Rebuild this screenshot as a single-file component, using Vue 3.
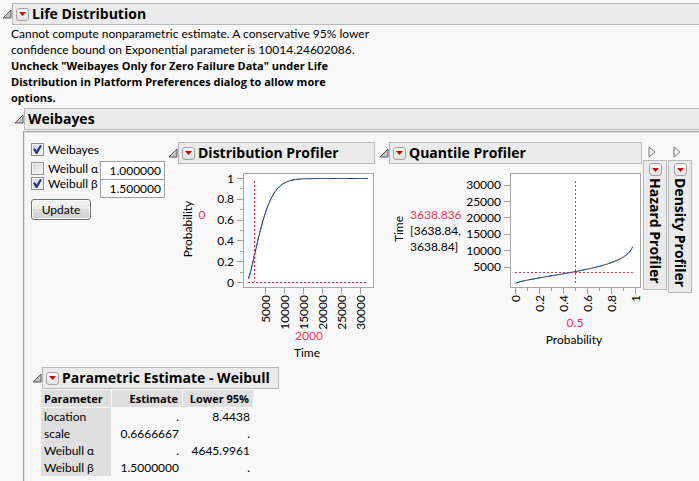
<script setup>
import { ref } from 'vue'

const useWeibayes = ref(true)
const fixAlpha = ref(false)
const fixBeta = ref(true)
const alpha = ref('1.000000')
const beta = ref('1.500000')

const scale = 4645.9961
const shape = 1.5

// Distribution profiler scales
const timeX = (t) => 246.5 + (t * 19) / 5000
const probY = (p) => 282.5 - p * 104
// Quantile profiler scales
const probX = (p) => 515.5 + p * 120
const timeY = (t) => 283.5 - (t * 82) / 25000

const toPath = (points) =>
  'M' + points.map(([x, y]) => `${x.toFixed(2)} ${y.toFixed(2)}`).join('L')

const cdfPoints = []
for (let t = 500; t <= 32000; t += 250) {
  cdfPoints.push([timeX(t), probY(1 - Math.exp(-Math.pow(t / scale, shape)))])
}
const cdfPath = toPath(cdfPoints)

const quantilePoints = []
for (let p = 0.001; p <= 0.976; p += 0.0075) {
  quantilePoints.push([probX(p), timeY(scale * Math.pow(-Math.log(1 - p), 1 / shape))])
}
const quantilePath = toPath(quantilePoints)

const snap = (v) => Math.floor(v) + 0.5
const probTicks = [0, 0.2, 0.4, 0.6, 0.8, 1]
const probMinor = [0.1, 0.3, 0.5, 0.7, 0.9]
const timeTicks = [5000, 10000, 15000, 20000, 25000, 30000]

const estimates = [
  { name: 'location', estimate: '.', lower: '8.4438' },
  { name: 'scale', estimate: '0.6666667', lower: '.' },
  { name: 'Weibull α', estimate: '.', lower: '4645.9961' },
  { name: 'Weibull β', estimate: '1.5000000', lower: '.' }
]
</script>

<template>
  <main class="report">
    <header class="outline">
      <button class="disclose" aria-label="Collapse Life Distribution">
        <svg viewBox="0 0 10 10"><path d="M9 1V9H1Z" /></svg>
      </button>
      <div class="bar grow">
        <button class="menu" aria-label="Life Distribution options">
          <svg viewBox="0 0 9 5"><path d="M0 0H9L4.5 5Z" /></svg>
        </button>
        <h1>Life Distribution</h1>
      </div>
    </header>

    <p class="message">
      Cannot compute nonparametric estimate. A conservative 95% lower<br />
      confidence bound on Exponential parameter is 10014.24602086.<br />
      <strong>
        Uncheck "Weibayes Only for Zero Failure Data" under Life<br />
        Distribution in Platform Preferences dialog to allow more<br />
        options.
      </strong>
    </p>

    <section class="weibayes">
      <div class="outline">
        <button class="disclose" aria-label="Collapse Weibayes">
          <svg viewBox="0 0 10 10"><path d="M9 1V9H1Z" /></svg>
        </button>
        <div class="bar grow"><h2>Weibayes</h2></div>
      </div>

      <div class="panel">
        <div class="row">
          <form class="controls" @submit.prevent>
            <label class="check"><input v-model="useWeibayes" type="checkbox" />Weibayes</label>
            <div class="params">
              <div class="checks">
                <label class="check"><input v-model="fixAlpha" type="checkbox" />Weibull α</label>
                <label class="check"><input v-model="fixBeta" type="checkbox" />Weibull β</label>
              </div>
              <div class="fields">
                <input v-model="alpha" type="text" aria-label="Weibull α value" />
                <input v-model="beta" type="text" aria-label="Weibull β value" />
              </div>
            </div>
            <button class="update" type="submit">Update</button>
          </form>

          <section class="profiler dist">
            <div class="outline">
              <button class="disclose" aria-label="Collapse Distribution Profiler">
                <svg viewBox="0 0 10 10"><path d="M9 1V9H1Z" /></svg>
              </button>
              <div class="bar grow">
                <button class="menu" aria-label="Distribution Profiler options">
                  <svg viewBox="0 0 9 5"><path d="M0 0H9L4.5 5Z" /></svg>
                </button>
                <h3>Distribution Profiler</h3>
              </div>
            </div>
            <svg class="plot" viewBox="178 164 197 196" width="197" height="196">
              <rect class="frame" x="243.5" y="173.5" width="130" height="114" />
              <g v-for="p in probTicks" :key="p">
                <path class="tick" :d="`M237 ${snap(probY(p))}H243`" />
                <text class="end" x="234" :y="probY(p) + 4">{{ p }}</text>
              </g>
              <path v-for="p in probMinor" :key="p" class="tick" :d="`M240 ${snap(probY(p))}H243`" />
              <g v-for="t in timeTicks" :key="t">
                <path class="tick" :d="`M${snap(timeX(t))} 288V294`" />
                <text class="end" :transform="`translate(${snap(timeX(t)) + 4} 295) rotate(-90)`">{{ t }}</text>
              </g>
              <path class="curve" :d="cdfPath" />
              <path class="curve overlay" :d="cdfPath" />
              <path class="cross" d="M254.5 181V282M248 282.5H367" />
              <text class="mid" transform="translate(192 229) rotate(-90)">Probability</text>
              <text class="red mid" x="202" y="219">0</text>
              <text class="red mid" x="309" y="340">2000</text>
              <text class="mid" x="307" y="357">Time</text>
            </svg>
          </section>

          <section class="profiler quant">
            <div class="outline">
              <button class="disclose" aria-label="Collapse Quantile Profiler">
                <svg viewBox="0 0 10 10"><path d="M9 1V9H1Z" /></svg>
              </button>
              <div class="bar grow">
                <button class="menu" aria-label="Quantile Profiler options">
                  <svg viewBox="0 0 9 5"><path d="M0 0H9L4.5 5Z" /></svg>
                </button>
                <h3>Quantile Profiler</h3>
              </div>
            </div>
            <svg class="plot" viewBox="389 164 253 196" width="253" height="196">
              <rect class="frame" x="510.5" y="173.5" width="130" height="114" />
              <g v-for="t in timeTicks" :key="t">
                <path class="tick" :d="`M504 ${snap(timeY(t))}H510`" />
                <text class="end" x="501" :y="timeY(t) + 4">{{ t }}</text>
              </g>
              <g v-for="p in probTicks" :key="p">
                <path class="tick" :d="`M${probX(p)} 288V294`" />
                <text class="end" :transform="`translate(${probX(p) + 4} 295) rotate(-90)`">{{ p }}</text>
              </g>
              <path v-for="p in probMinor" :key="p" class="tick" :d="`M${probX(p)} 288V291`" />
              <path class="curve" :d="quantilePath" />
              <path class="curve overlay" :d="quantilePath" />
              <path class="cross" d="M575.5 181V284M515 272.5H633" />
              <text class="mid" transform="translate(403 229) rotate(-90)">Time</text>
              <text class="red" x="410" y="219">3638.836</text>
              <text x="410" y="235">[3638.84,</text>
              <text x="410" y="251">3638.84]</text>
              <text class="red mid" x="575" y="327">0.5</text>
              <text class="mid" x="574" y="344">Probability</text>
            </svg>
          </section>

          <section v-for="name in ['Hazard', 'Density']" :key="name" class="closed">
            <button class="disclose" :aria-label="`Expand ${name} Profiler`">
              <svg class="open" viewBox="0 0 8 12"><path d="M1 1L7 6L1 11Z" /></svg>
            </button>
            <div class="bar vertical">
              <button class="menu" :aria-label="`${name} Profiler options`">
                <svg viewBox="0 0 9 5"><path d="M0 0H9L4.5 5Z" /></svg>
              </button>
              <h3>{{ name }} Profiler</h3>
            </div>
          </section>
        </div>

        <section class="estimates">
          <div class="outline">
            <button class="disclose" aria-label="Collapse Parametric Estimate">
              <svg viewBox="0 0 10 10"><path d="M9 1V9H1Z" /></svg>
            </button>
            <div class="bar wide">
              <button class="menu" aria-label="Parametric Estimate options">
                <svg viewBox="0 0 9 5"><path d="M0 0H9L4.5 5Z" /></svg>
              </button>
              <h3>Parametric Estimate - Weibull</h3>
            </div>
          </div>
          <table>
            <thead>
              <tr><th>Parameter</th><th>Estimate</th><th>Lower 95%</th></tr>
            </thead>
            <tbody>
              <tr v-for="row in estimates" :key="row.name">
                <th scope="row">{{ row.name }}</th>
                <td>{{ row.estimate }}</td>
                <td>{{ row.lower }}</td>
              </tr>
            </tbody>
          </table>
        </section>
      </div>
    </section>
  </main>
</template>

<style>
body {
  background: #f8f8f8;
}
</style>

<style scoped>
.report {
  box-sizing: border-box;
  min-height: 100vh;
  display: flex;
  flex-direction: column;
  padding: 3px 0 0 2px;
  overflow: hidden;
  color: #000;
  font: 12px/16px Lato, 'Open Sans', sans-serif;
}
button,
input {
  box-sizing: border-box;
  margin: 0;
  padding: 0;
  font: inherit;
  color: inherit;
}
.outline {
  display: flex;
  align-items: center;
}
.disclose {
  flex: none;
  width: 10px;
  height: 10px;
  border: 0;
  background: none;
  display: flex;
}
.disclose svg {
  width: 10px;
  height: 10px;
  fill: #c4c4c4;
  stroke: #555;
}
.disclose svg.open {
  width: 8px;
  height: 12px;
  fill: #fdfdfd;
  stroke: #777;
}
.bar {
  box-sizing: border-box;
  height: 22px;
  display: flex;
  align-items: center;
  gap: 3px;
  padding: 0 3px;
  background: #ebebeb;
  border: 1px solid #b8b8b8;
}
.grow {
  flex: 1;
}
.report > .outline > .bar,
.weibayes > .outline > .bar {
  border-right: 0;
}
h1,
h2,
h3 {
  margin: 0;
  font: 700 14px/20px 'Open Sans', 'Noto Sans', sans-serif;
  white-space: nowrap;
}
.menu {
  flex: none;
  width: 13px;
  height: 13px;
  display: flex;
  align-items: center;
  justify-content: center;
  border: 1px solid #a3a3a3;
  border-radius: 3px;
  background: linear-gradient(#fafafa, #e2e2e2);
}
.menu svg {
  width: 7px;
  height: 4px;
  fill: #d00000;
}
.message {
  margin: 1px 0 2px 9px;
  white-space: nowrap;
}
.message strong,
thead th {
  font-family: 'Open Sans', 'Noto Sans', sans-serif;
  font-size: 11px;
  font-weight: 700;
}
.weibayes {
  flex: 1;
  display: flex;
  flex-direction: column;
  padding-left: 12px;
}
.panel {
  flex: 1;
  margin: 1px 0 0 9px;
  border-left: 1px solid #a0a0a0;
  border-top: 1px solid #a0a0a0;
  box-shadow: inset 1px 1px #e2e2e2;
  padding: 10px 0 5px 7px;
}
.row {
  display: flex;
  align-items: flex-start;
}
.controls {
  flex: none;
  width: 134px;
  display: flex;
  flex-direction: column;
  align-items: flex-start;
}
.check {
  display: flex;
  align-items: center;
  gap: 4px;
  height: 15px;
  white-space: nowrap;
}
.check input {
  appearance: none;
  width: 13px;
  height: 13px;
  border: 1px solid #8e8f8f;
  background: linear-gradient(135deg, #cfd3d8, #f8f8f8);
  box-shadow: inset 0 0 0 1px #f4f4f4;
}
.check input:checked::before {
  content: '';
  display: block;
  width: 9px;
  height: 9px;
  margin: 1px;
  background: #2b3580;
  clip-path: polygon(0 45%, 20% 35%, 40% 62%, 78% 0, 100% 8%, 48% 100%, 32% 100%);
}
.controls > .check {
  margin: 0 0 4px;
}
.params {
  display: flex;
  align-items: flex-start;
  width: 100%;
}
.checks {
  width: 69px;
}
.fields {
  flex: 1;
  min-width: 0;
  display: flex;
  flex-direction: column;
}
.fields input {
  width: 100%;
  height: 19px;
  padding-right: 3px;
  border: 1px solid #a0a0a0;
  background: #fff;
  text-align: right;
}
.fields input + input {
  margin-top: -1px;
}
.update {
  margin-top: 1px;
  width: 60px;
  height: 21px;
  border: 1px solid #707070;
  border-radius: 3px;
  background: linear-gradient(#f3f3f3, #ebebeb 50%, #dddddd 50%, #cfcfcf);
  box-shadow: inset 0 0 0 1px #fafafa;
  line-height: 18px;
}
.profiler {
  flex: none;
}
.dist {
  margin-left: 3px;
}
.quant {
  margin-left: 4px;
}
.plot {
  display: block;
  margin-left: 10px;
}
.plot text {
  font-size: 12px;
}
.plot .end {
  text-anchor: end;
}
.plot .mid {
  text-anchor: middle;
}
.plot .red {
  fill: #f03358;
}
.frame {
  fill: #fff;
  stroke: #a6a6a6;
}
.tick {
  stroke: #a0a0a0;
}
.curve {
  fill: none;
  stroke: #222;
}
.overlay {
  stroke: #2f62e0;
  stroke-dasharray: 9 7;
}
.cross {
  fill: none;
  stroke: #e0304c;
  stroke-dasharray: 2 2;
}
.closed {
  flex: none;
  display: flex;
  flex-direction: column;
  padding-top: 4px;
  margin-left: 1px;
}
.closed .disclose {
  width: 8px;
  height: 12px;
  margin: 0 0 2px 5px;
}
.vertical {
  flex-direction: column;
  width: 24px;
  height: auto;
  padding: 2px 0 5px;
  gap: 2px;
}
.vertical h3 {
  writing-mode: vertical-rl;
}
.estimates {
  margin: 7px 0 0 1px;
}
.wide {
  min-width: 237px;
}
table {
  margin: 1px 0 0 9px;
  border-collapse: separate;
  border-spacing: 0;
}
th,
td {
  box-sizing: border-box;
  height: 17px;
  width: 71px;
  padding: 0 4px;
  line-height: 17px;
  text-align: right;
  white-space: nowrap;
}
thead th {
  background: #dfdfdf;
  border-right: 1px solid #f8f8f8;
}
th:first-child {
  text-align: left;
  padding-left: 3px;
}
tbody th {
  font-weight: 400;
  background: #dfdfdf;
  border-right: 1px solid #f8f8f8;
}
tbody tr:first-child > * {
  border-top: 1px solid #f8f8f8;
}
</style>
